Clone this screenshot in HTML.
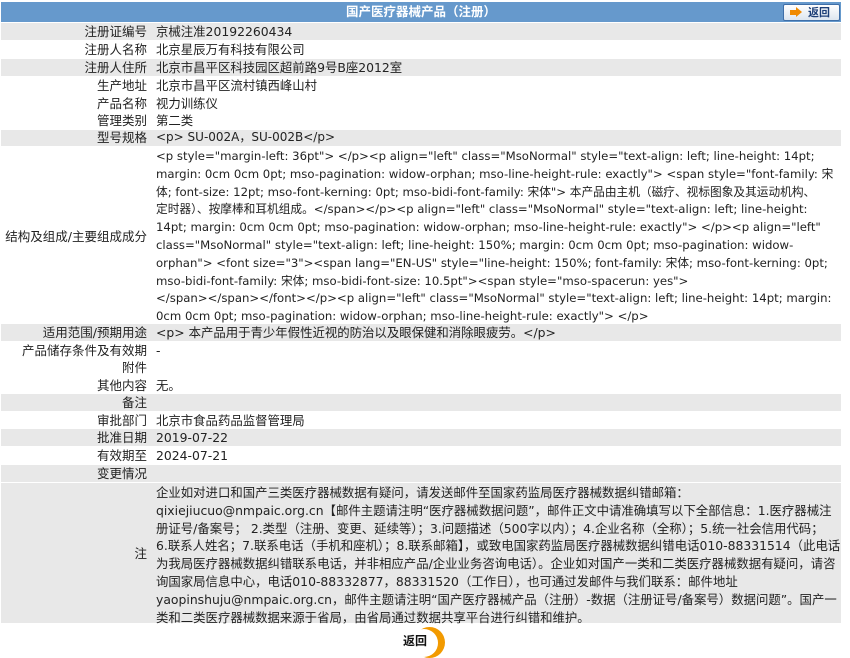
<!DOCTYPE html>
<html><head><meta charset="utf-8"><style>
body{margin:0;width:850px;height:655px;background:#fff;font-family:"DejaVu Sans","Noto Sans CJK SC",sans-serif;font-size:12.4px;color:#222;position:relative;overflow:hidden}
.r{position:absolute;left:1px;width:840px;}
.g{background:#e8e8e8}
.l{position:absolute;right:694px;white-space:nowrap;text-align:right;line-height:17.8px;top:0;font-size:12.5px}
.v{position:absolute;left:155px;white-space:nowrap;line-height:17.8px;top:0}
.hd{position:absolute;left:1px;top:2px;width:840px;height:20px;background:#6699cc;color:#fff;font-weight:bold;text-align:center;line-height:20px;font-size:12.5px}
</style></head><body>
<div class="hd">国产医疗器械产品（注册）</div>
<div style="position:absolute;left:783px;top:4px;width:55px;height:15px;border:1px solid #3f6fa8;border-radius:2px;background:linear-gradient(#fff,#dde6f0);font-size:11px;font-weight:bold;color:#1d3f78;line-height:15px;">
<span style="position:absolute;left:6px;top:5px;width:6px;height:5px;background:#f08a00"></span><span style="position:absolute;left:12px;top:2px;width:0;height:0;border-top:5.5px solid transparent;border-bottom:5.5px solid transparent;border-left:6px solid #f08a00"></span><span style="position:absolute;left:24px">返回</span></div>

<div class="r g" style="top:23px;height:17px"><span class="l">注册证编号</span><span class="v">京械注准20192260434</span></div>
<div class="r" style="top:41px;height:17px"><span class="l">注册人名称</span><span class="v">北京星辰万有科技有限公司</span></div>
<div class="r g" style="top:59px;height:17px"><span class="l">注册人住所</span><span class="v">北京市昌平区科技园区超前路9号B座2012室</span></div>
<div class="r" style="top:77px;height:17px"><span class="l">生产地址</span><span class="v">北京市昌平区流村镇西峰山村</span></div>
<div class="r" style="top:95px;height:17px"><span class="l">产品名称</span><span class="v">视力训练仪</span></div>
<div class="r" style="top:112px;height:17px"><span class="l">管理类别</span><span class="v">第二类</span></div>
<div class="r g" style="top:130px;height:16px"><span class="l" style="top:-1px">型号规格</span><span class="v" style="top:-1px;font-size:12px">&lt;p&gt; SU-002A，SU-002B&lt;/p&gt;</span></div>
<div class="r" style="top:147px;height:176px"><span class="l" style="top:81px">结构及组成/主要组成成分</span><span class="v" style="top:1px;font-size:11.7px">&lt;p style="margin-left: 36pt"&gt; &lt;/p&gt;&lt;p align="left" class="MsoNormal" style="text-align: left; line-height: 14pt;<br>margin: 0cm 0cm 0pt; mso-pagination: widow-orphan; mso-line-height-rule: exactly"&gt; &lt;span style="font-family: 宋<br>体; font-size: 12pt; mso-font-kerning: 0pt; mso-bidi-font-family: 宋体"&gt; 本产品由主机（磁疗、视标图象及其运动机构、<br>定时器）、按摩棒和耳机组成。&lt;/span&gt;&lt;/p&gt;&lt;p align="left" class="MsoNormal" style="text-align: left; line-height:<br>14pt; margin: 0cm 0cm 0pt; mso-pagination: widow-orphan; mso-line-height-rule: exactly"&gt; &lt;/p&gt;&lt;p align="left"<br>class="MsoNormal" style="text-align: left; line-height: 150%; margin: 0cm 0cm 0pt; mso-pagination: widow-<br>orphan"&gt; &lt;font size="3"&gt;&lt;span lang="EN-US" style="line-height: 150%; font-family: 宋体; mso-font-kerning: 0pt;<br>mso-bidi-font-family: 宋体; mso-bidi-font-size: 10.5pt"&gt;&lt;span style="mso-spacerun: yes"&gt;<br>&lt;/span&gt;&lt;/span&gt;&lt;/font&gt;&lt;/p&gt;&lt;p align="left" class="MsoNormal" style="text-align: left; line-height: 14pt; margin:<br>0cm 0cm 0pt; mso-pagination: widow-orphan; mso-line-height-rule: exactly"&gt; &lt;/p&gt;</span></div>
<div class="r g" style="top:324px;height:17px"><span class="l">适用范围/预期用途</span><span class="v">&lt;p&gt; 本产品用于青少年假性近视的防治以及眼保健和消除眼疲劳。&lt;/p&gt;</span></div>
<div class="r" style="top:342px;height:16px"><span class="l">产品储存条件及有效期</span><span class="v">-</span></div>
<div class="r" style="top:359px;height:17px"><span class="l">附件</span></div>
<div class="r" style="top:377px;height:16px"><span class="l">其他内容</span><span class="v">无。</span></div>
<div class="r g" style="top:394px;height:17px"><span class="l">备注</span></div>
<div class="r" style="top:412px;height:16px"><span class="l">审批部门</span><span class="v">北京市食品药品监督管理局</span></div>
<div class="r g" style="top:429px;height:17px"><span class="l">批准日期</span><span class="v">2019-07-22</span></div>
<div class="r" style="top:447px;height:17px"><span class="l">有效期至</span><span class="v">2024-07-21</span></div>
<div class="r g" style="top:465px;height:17px"><span class="l">变更情况</span></div>
<div class="r g" style="top:483px;height:140px"><span class="l" style="top:62px">注</span><span class="v" style="top:1px">企业如对进口和国产三类医疗器械数据有疑问，请发送邮件至国家药监局医疗器械数据纠错邮箱：<br>qixiejiucuo@nmpaic.org.cn【邮件主题请注明“医疗器械数据问题”，邮件正文中请准确填写以下全部信息：1.医疗器械注<br>册证号/备案号； 2.类型（注册、变更、延续等）；3.问题描述（500字以内）；4.企业名称（全称）；5.统一社会信用代码；<br>6.联系人姓名；7.联系电话（手机和座机）；8.联系邮箱】，或致电国家药监局医疗器械数据纠错电话010-88331514（此电话<br>为我局医疗器械数据纠错联系电话，并非相应产品/企业业务咨询电话）。企业如对国产一类和二类医疗器械数据有疑问，请咨<br>询国家局信息中心，电话010-88332877，88331520（工作日），也可通过发邮件与我们联系：邮件地址<br>yaopinshuju@nmpaic.org.cn，邮件主题请注明“国产医疗器械产品（注册）-数据（注册证号/备案号）数据问题”。国产一<br>类和二类医疗器械数据来源于省局，由省局通过数据共享平台进行纠错和维护。</span></div>

<div style="position:absolute;left:414px;top:627px;width:31px;height:31px;border-radius:50%;background:#f29a00"></div>
<div style="position:absolute;left:410px;top:629px;width:28px;height:28px;border-radius:50%;background:#fff"></div>
<div style="position:absolute;left:403px;top:632px;font-weight:bold;font-size:12px;color:#111">返回</div>
</body></html>
